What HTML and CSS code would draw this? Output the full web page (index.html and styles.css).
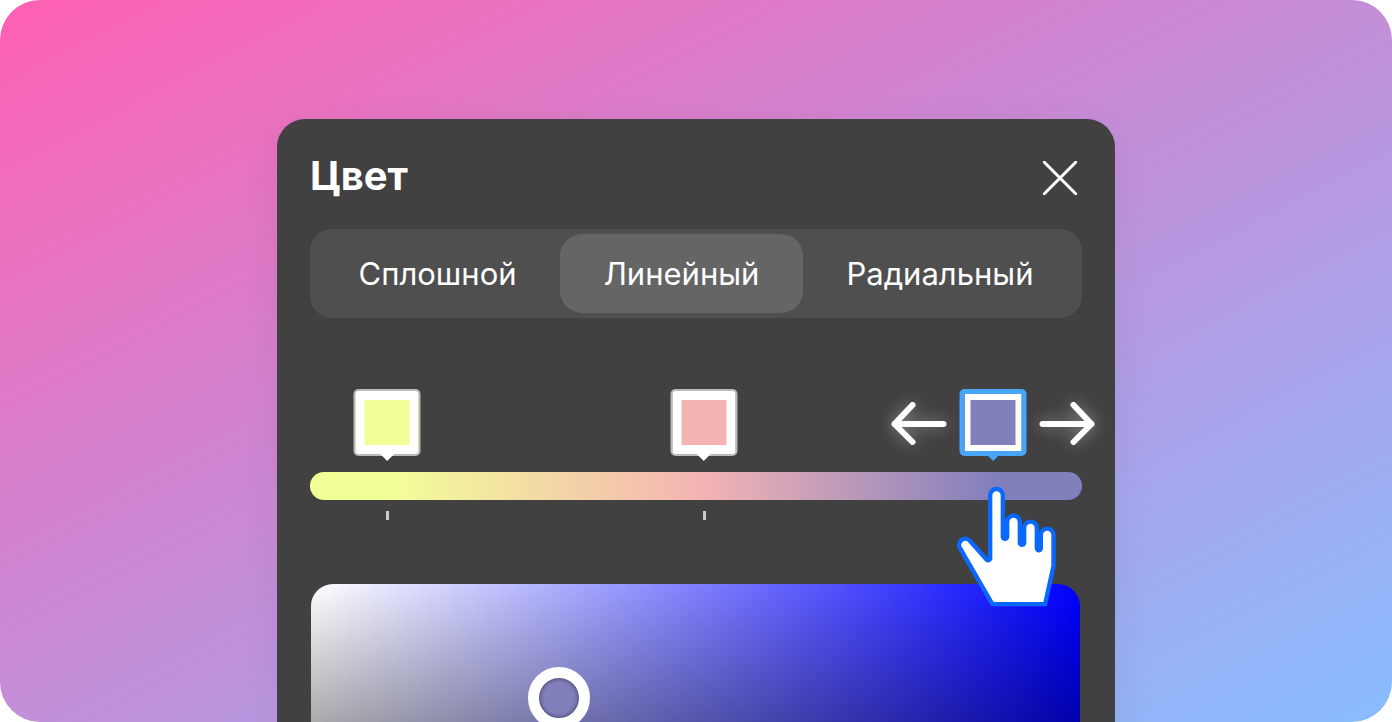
FILE: index.html
```
<!DOCTYPE html>
<html lang="ru">
<head>
<meta charset="utf-8">
<title>Цвет</title>
<meta name="viewport" content="width=device-width, initial-scale=1">
<link rel="stylesheet" href="styles.css">
</head>
<body>

<main class="stage">
	<section class="panel">
		<header class="panel-header">
			<h1>Цвет</h1>
			<button type="button" class="close" aria-label="Закрыть">
				<svg viewBox="0 0 34 34" width="34" height="34"><path d="M1 1L33 33M33 1L1 33"/></svg>
			</button>
		</header>

		<div class="tabs">
			<button type="button">Сплошной</button>
			<button type="button" class="active">Линейный</button>
			<button type="button">Радиальный</button>
		</div><!-- tabs -->

		<div class="gradient">
			<div class="stops">
				<div class="stop" style="left: 10%">
					<button type="button" class="swatch yellow" aria-label="Цвет 1"></button>
				</div>
				<div class="stop" style="left: 51%">
					<button type="button" class="swatch pink" aria-label="Цвет 2"></button>
				</div>
				<div class="stop" style="left: 88.5%">
					<svg class="arrow" viewBox="0 0 56 44" width="56" height="44"><path d="M53 23H4M22 4L4 23L22 41"/></svg>
					<button type="button" class="swatch violet selected" aria-label="Цвет 3"></button>
					<svg class="arrow" viewBox="0 0 56 44" width="56" height="44"><path d="M3 23H52M34 4L52 23L34 41"/></svg>
				</div>
			</div><!-- stops -->

			<div class="bar"></div>

			<div class="ticks">
				<span class="tick" style="left: 10%"></span>
				<span class="tick" style="left: 51%"></span>
			</div>

			<svg class="hand" viewBox="48 33 306 366" width="102" height="122">
				<path d="M157 254V61a12.5 12.5 0 0 1 25 0V185a13 13 0 0 0 26 0V141a12.5 12.5 0 0 1 25 0V203a13 13 0 0 0 26 0V159a12.5 12.5 0 0 1 25 0V220a12.5 12.5 0 0 0 25 0V180a12.5 12.5 0 0 1 25 0V272L310 381H161L66 217a12 12 0 0 1 20 -14L134 257Q146 270 157 254Z"/>
			</svg>
		</div><!-- gradient -->

		<div class="area">
			<span class="handle"></span>
		</div>
	</section>
</main>

</body>
</html>
```

FILE: styles.css
```
body {
	margin: 0;
	background: #fff;
	color: #fff;
	font-family: Inter, "Liberation Sans", sans-serif;
}

button {
	margin: 0; padding: 0;
	border: none;
	background: none;
	color: inherit;
	font: inherit;
	cursor: pointer;
}

svg {
	display: block;
	fill: none;
	stroke: #fff;
}

.stage {
	box-sizing: border-box;
	height: 100vh;
	padding: 119px 277px 0;
	overflow: hidden;
	border-radius: 40px;
	background: linear-gradient(to bottom right, #ff60b2, #88bdff);
}

.panel {
	padding: 33px 33px 32px;
	border-radius: 28px;
	background: #414141;
	box-shadow: 0 8px 40px rgba(0, 0, 0, .06);
}

.panel-header {
	display: flex;
	justify-content: space-between;
	align-items: flex-end;
	margin-bottom: 29px;
}

	.panel-header h1 {
		margin: 0;
		font-size: 40px;
		line-height: 48px;
		font-weight: 700;
	}

	.close {
		padding: 5px;
	}

	.close svg {
		stroke-width: 3;
		stroke-linecap: round;
	}

.tabs {
	display: flex;
	padding: 5px;
	border-radius: 22px;
	background: #4f4f4f;
}

	.tabs button {
		flex: 1 1 auto;
		border-radius: 22px;
		font-size: 31px;
		line-height: 79px;
	}

	.tabs button.active {
		background: #656565;
	}

.gradient {
	position: relative;
	display: flex;
	flex-direction: column;
	gap: 11px;
	margin: 71px 0 64px;
}

.stops {
	position: relative;
	height: 72px;
}

	.stop {
		position: absolute;
		top: 0;
		display: flex;
		align-items: center;
		gap: 13px;
		transform: translateX(-50%);
	}

	/* white frame, then the colour of the stop */
	.swatch {
		position: relative;
		box-sizing: border-box;
		width: 67px;
		height: 67px;
		border: 2px solid #bababa;
		border-radius: 5px;
		box-shadow: inset 0 0 0 9px #fff;
	}

	/* pointer under the swatch */
	.swatch::after {
		content: "";
		position: absolute;
		left: 50%;
		top: 100%;
		width: 16px;
		height: 8px;
		margin: -1px 0 0 -8px;
		background: #fff;
		clip-path: polygon(0 0, 100% 0, 50% 100%);
	}

	.swatch.selected {
		border: 5px solid #47a6f8;
		box-shadow: inset 0 0 0 6px #fff;
	}

	.swatch.selected::after {
		margin-top: 2px;
		background: #47a6f8;
	}

	.yellow { background-color: #f2ff97; }
	.pink { background-color: #f4b3b3; }
	.violet { background-color: #8280bc; }

	.arrow {
		stroke-width: 6;
		stroke-linecap: round;
		stroke-linejoin: round;
		overflow: visible;
		filter: drop-shadow(0 0 8px rgba(255, 255, 255, .4));
	}

.bar {
	height: 28px;
	border-radius: 14px;
	background: linear-gradient(to right, #f2ff97 10%, #f4b3b3 51%, #8280bc 88.5%);
}

.ticks {
	position: relative;
	height: 9px;
}

	.tick {
		position: absolute;
		width: 3px;
		height: 9px;
		margin-left: -1px;
		background: #ccc;
	}

.hand {
	position: absolute;
	z-index: 1;
	left: 88.5%;
	top: 97px;
	margin-left: -37px;
	fill: #fff;
	stroke: #0b68ff;
	stroke-width: 26;
	paint-order: stroke;
}

.area {
	position: relative;
	height: 420px;
	margin: 0 2px 0 1px;
	border-radius: 22px;
	background:
		linear-gradient(to bottom, transparent, #000),
		linear-gradient(to right, #fff, #00f);
}

	.handle {
		position: absolute;
		left: 32.2%;
		top: 27.2%;
		box-sizing: border-box;
		width: 62px;
		height: 62px;
		border: 11px solid #fff;
		border-radius: 50%;
		background: #8280bc;
		box-shadow: inset 0 0 5px rgba(0, 0, 0, .6);
		transform: translate(-50%, -50%);
	}
```
